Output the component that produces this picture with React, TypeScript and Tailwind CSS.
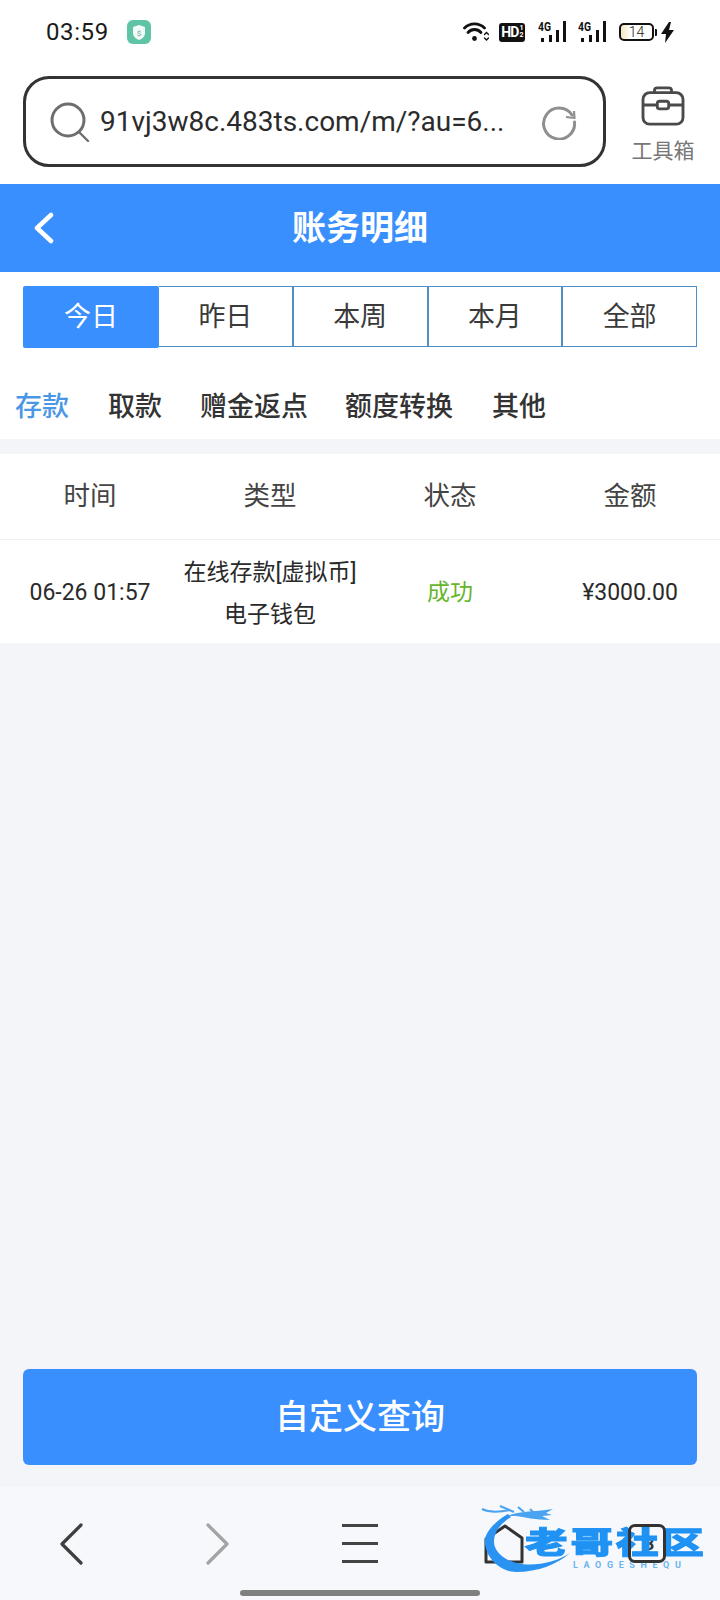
const cjk = "font-['Roboto','Noto_Sans_CJK_SC',sans-serif]";

function Seg({ label, active, last }: { label: string; active?: boolean; last?: boolean }) {
  return (
    <div
      className={
        active
          ? "flex h-[62px] w-[136px] items-center justify-center rounded-[2px] bg-[#3a8fff] text-[27px] text-white"
          : `flex h-[61px] flex-1 items-center justify-center border-y border-[#4f8fc4] pt-[1px] text-[27px] text-[#3a3a3a] ${last ? "border-r" : "border-r-2"}`
      }
    >
      {label}
    </div>
  );
}

function Signal() {
  return (
    <svg width="28" height="24" viewBox="0 0 28 24">
      <text x="0" y="11" fontSize="12" fontWeight="700" fontFamily="Roboto" fill="#111" textLength="13" lengthAdjust="spacingAndGlyphs">4G</text>
      <rect x="3" y="18" width="3" height="4" fill="#111" />
      <rect x="11" y="15" width="3" height="7" fill="#111" />
      <rect x="18" y="10" width="3" height="12" fill="#111" />
      <rect x="25" y="1" width="3" height="21" fill="#111" />
    </svg>
  );
}

export default function App() {
  return (
    <div className={`relative flex h-[1600px] w-[720px] flex-col overflow-hidden bg-[#f3f5f8] ${cjk}`}>
      {/* status bar */}
      <div className="flex h-[68px] items-start justify-between bg-white pl-[46px] pr-[46px] pt-[20px]">
        <div className="flex items-center gap-[18px]">
          <span className="text-[24px] leading-[24px] tracking-[0.6px] text-[#1a1a1a]">03:59</span>
          <span className="flex h-[24px] w-[24px] items-center justify-center rounded-[6px] bg-[#5fc3a5]">
            <svg width="16" height="17" viewBox="0 0 16 17">
              <path d="M8 1 L14 3 V9 C14 12.5 11 15 8 16 C5 15 2 12.5 2 9 V3 Z" fill="#f2fbf8" />
              <text x="8" y="11.5" textAnchor="middle" fontSize="8" fontFamily="Roboto" fill="#6aa897">$</text>
            </svg>
          </span>
        </div>
        <div className="flex h-[24px] items-center">
          <svg width="26" height="20" viewBox="0 0 26 20" className="mr-[10px]" fill="none" stroke="#111" strokeLinecap="round">
            <path d="M1.5 6 C7 0.5 16 0.5 21.5 6" strokeWidth="2.8" />
            <path d="M5 10.5 C8.5 6.5 14.5 6.5 18 10.5" strokeWidth="2.8" />
            <circle cx="11.5" cy="16.5" r="2.4" fill="#111" stroke="none" />
            <path d="M21.5 12.5 l2 -2 l2 2 M21.5 16 l2 2 l2 -2" strokeWidth="1.4" />
          </svg>
          <span className="mr-[13px] flex h-[19px] w-[26px] items-center justify-center gap-[1px] rounded-[3px] bg-[#111] text-[14px] font-bold leading-none tracking-[-0.8px] text-white">
            HD
            <span className="flex flex-col text-[7px] leading-[7px]">
              <span>1</span>
              <span>2</span>
            </span>
          </span>
          <Signal />
          <span className="w-[12px]" />
          <Signal />
          <span className="w-[13px]" />
          <span className="flex h-[18px] w-[35px] items-center justify-center rounded-[5px] border-2 border-[#111] bg-[linear-gradient(90deg,#f6e6c4_0%,#fdf6e6_22%,#ffffff_30%)] text-[14px] font-light leading-none text-[#222]">
            14
          </span>
          <span className="ml-[1px] h-[7px] w-[2px] rounded-r-[1px] bg-[#111]" />
          <svg width="13" height="21" viewBox="0 0 13 21" className="ml-[4px]">
            <path d="M8 0 L0 12 H5 L4 21 L13 8 H8 L10 0 Z" fill="#111" />
          </svg>
        </div>
      </div>

      {/* address bar */}
      <div className="flex h-[116px] items-start bg-white pl-[23px] pt-[8px]">
        <div className="flex h-[91px] w-[583px] items-center rounded-[26px] border-[3px] border-[#333] pl-[24px] pr-[26px]">
          <svg width="40" height="40" viewBox="0 0 40 40" fill="none" stroke="#6e6e6e" strokeWidth="3" className="shrink-0">
            <circle cx="18" cy="18" r="16" />
            <path d="M29 30 L38 39" strokeWidth="2.4" strokeLinecap="round" />
          </svg>
          <span className="ml-[10px] flex-1 whitespace-nowrap text-[28px] leading-none text-[#2b2b2b]">
            91vj3w8c.483ts.com/m/?au=6...
          </span>
          <svg width="36" height="36" viewBox="0 0 36 36" fill="none" stroke="#8f8f8f" strokeWidth="3" className="shrink-0">
            <path d="M31 11 A15.5 15.5 0 1 0 33.5 18" strokeLinecap="round" />
            <path d="M25 13 L33.5 14 L33 7" strokeLinejoin="round" strokeWidth="2.2" />
          </svg>
        </div>
        <div className="flex flex-1 flex-col items-center pt-[10px]">
          <svg width="44" height="40" viewBox="0 0 46 42" fill="none" stroke="#4a4a4a" strokeWidth="3" strokeLinejoin="round">
            <path d="M14 7 V5 C14 3 15 2 17 2 H29 C31 2 32 3 32 5 V7" />
            <rect x="2" y="7" width="42" height="33" rx="7" />
            <path d="M2 20 H17 M29 20 H44" />
            <rect x="17" y="16" width="12" height="8" rx="2.5" />
          </svg>
          <span className="mt-[12px] text-[21px] leading-[26px] text-[#777]">工具箱</span>
        </div>
      </div>

      {/* header */}
      <div className="relative flex h-[88px] items-center justify-center bg-[#3a8fff]">
        <svg width="22" height="32" viewBox="0 0 22 32" fill="none" stroke="#fff" strokeWidth="4.5" strokeLinecap="round" strokeLinejoin="round" className="absolute left-[33px] top-[28px]">
          <path d="M18 3 L4 16 L18 29" />
        </svg>
        <span className="text-[34px] font-bold text-white">账务明细</span>
      </div>

      {/* range tabs */}
      <div className="bg-white px-[23px] pt-[14px]">
        <div className="flex h-[62px] items-start">
          <Seg label="今日" active />
          <Seg label="昨日" />
          <Seg label="本周" />
          <Seg label="本月" />
          <Seg label="全部" last />
        </div>
      </div>

      {/* type tabs */}
      <div className="flex h-[91px] items-center bg-white pl-[15px] pt-[28px] text-[27px] font-medium leading-none text-[#333]">
        <span className="text-[#4a97e6]">存款</span>
        <span className="ml-[39px]">取款</span>
        <span className="ml-[38px]">赠金返点</span>
        <span className="ml-[37px]">额度转换</span>
        <span className="ml-[39px]">其他</span>
      </div>

      {/* table */}
      <div className="mt-[15px] bg-white">
        <div className="grid h-[86px] grid-cols-4 items-center border-b border-[#f0f0f0] pb-[2px] text-center text-[26.5px] text-[#444]">
          <span>时间</span>
          <span>类型</span>
          <span>状态</span>
          <span>金额</span>
        </div>
        <div className="grid h-[103px] grid-cols-4 items-center pt-[4px] text-center text-[23px] text-[#2a2a2a]">
          <span>06-26 01:57</span>
          <span className="leading-[42px]">
            在线存款[虚拟币]
            <br />
            电子钱包
          </span>
          <span className="text-[#67b52c]">成功</span>
          <span>¥3000.00</span>
        </div>
      </div>

      <div className="flex-1" />

      {/* query button */}
      <div className="px-[23px] pb-[22px]">
        <div className="flex h-[96px] items-center justify-center rounded-[6px] bg-[#3a8fff] text-[34px] font-medium text-white">
          自定义查询
        </div>
      </div>

      {/* bottom nav */}
      <div className="relative h-[113px] bg-[#f6f8fc]">
        <svg width="24" height="42" viewBox="0 0 24 42" fill="none" stroke="#3f3f3f" strokeWidth="3.2" strokeLinecap="round" strokeLinejoin="round" className="absolute left-[60px] top-[36px]">
          <path d="M21 2 L2 21 L21 40" />
        </svg>
        <svg width="24" height="42" viewBox="0 0 24 42" fill="none" stroke="#a3a3a3" strokeWidth="3.2" strokeLinecap="round" strokeLinejoin="round" className="absolute left-[205px] top-[36px]">
          <path d="M3 2 L22 21 L3 40" />
        </svg>
        <div className="absolute left-[342px] top-[37px] flex h-[39px] w-[36px] flex-col justify-between">
          <span className="h-[3px] bg-[#444]" />
          <span className="h-[3px] bg-[#444]" />
          <span className="h-[3px] bg-[#444]" />
        </div>
        <div className="absolute bottom-[4px] left-[240px] h-[6px] w-[240px] rounded-full bg-[#808080]" />

        {/* home and tab count sit under the watermark */}
        <svg width="42" height="40" viewBox="0 0 42 40" fill="none" stroke="#333" strokeWidth="3" strokeLinejoin="round" className="absolute left-[483px] top-[37px]">
          <path d="M3 38 V15 L22 2 L39 14 V38 Z" />
        </svg>
        <span className="absolute left-[644px] top-[47px] text-[18px] font-bold leading-[20px] text-[#333]">3</span>

        {/* watermark */}
        <svg width="95" height="76" viewBox="0 0 95 76" fill="none" className="absolute left-[480px] top-[13px] blur-[0.5px]">
          <path d="M28 14 C14 22 3 34 5 44 C7 60 22 72 36 72 C58 72 78 64 90 53 C76 62 58 66 42 64 C26 62 14 52 14 42 C14 32 20 24 31 17 Z" fill="#2a93f2" />
          <path d="M27 16 C38 11 52 12 73 9 L66 13 L72 15 L62 16 L70 20 C56 20 44 17 36 16 Z" fill="#4aa3f0" />
          <path d="M2 9 C10 13 20 12 30 10 M20 6 L34 12 M38 7 L44 12 M50 9 L54 13" stroke="#4aa3f0" strokeWidth="2" />
        </svg>
        <span className="absolute left-[525px] top-[36px] origin-left scale-x-[1.42] text-[30px] font-black leading-[40px] tracking-[2px] text-[#1f92f3] blur-[0.4px] [-webkit-text-stroke:1px_#1f92f3]">
          老哥社区
        </span>
        <span className="absolute left-[573px] top-[72px] text-[9px] font-bold leading-[12px] tracking-[5.6px] text-[#6db4ee]">
          LAOGESHEQU
        </span>
        <div className="absolute left-[628px] top-[37px] h-[39px] w-[38px] rounded-[7px] border-[3px] border-[#333]" />
      </div>
    </div>
  );
}
